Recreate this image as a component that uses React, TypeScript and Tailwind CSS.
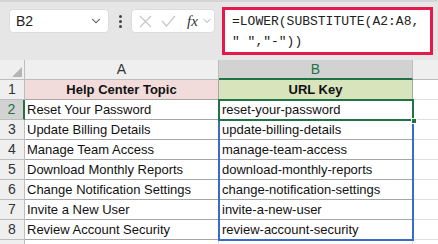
import { ChevronDown } from 'lucide-react';

const rows = [
  ['Reset Your Password', 'reset-your-password'],
  ['Update Billing Details', 'update-billing-details'],
  ['Manage Team Access', 'manage-team-access'],
  ['Download Monthly Reports', 'download-monthly-reports'],
  ['Change Notification Settings', 'change-notification-settings'],
  ['Invite a New User', 'invite-a-new-user'],
  ['Review Account Security', 'review-account-security'],
];

const cellFont = { fontFamily: '"Liberation Sans", Arial, sans-serif' };

const FormulaBar = () => (
  <div className="h-[60px] bg-[#e6e6e6] border-t-2 border-[#d4d4d4] flex items-start pt-[7px] pl-[9px] gap-0">
    {/* name box */}
    <div className="w-[100px] h-[24px] bg-white rounded-[4px] border border-[#dcdcdc] flex items-center pl-[6px] pr-[5px] justify-between">
      <span className="text-[14px] text-[#222]" style={cellFont}>B2</span>
      <ChevronDown size={14} strokeWidth={1.8} className="text-[#444]" />
    </div>
    <div className="w-[22px] h-[24px] flex flex-col items-center justify-center gap-[2px]">
      <span className="w-[3px] h-[3px] bg-[#444] rounded-full" />
      <span className="w-[3px] h-[3px] bg-[#444] rounded-full" />
      <span className="w-[3px] h-[3px] bg-[#444] rounded-full" />
    </div>
    {/* cancel / enter / fx */}
    <div className="w-[84px] h-[24px] bg-white rounded-[4px] border border-[#dcdcdc] flex items-center pl-[7px] gap-[9px]">
      <svg width="13" height="13" viewBox="0 0 13 13" className="shrink-0">
        <path d="M1 1 L12 12 M12 1 L1 12" stroke="#c8c8c8" strokeWidth="1.2" fill="none" />
      </svg>
      <svg width="15" height="12" viewBox="0 0 15 12" className="shrink-0">
        <path d="M1 6 L5.5 11 L14 1" stroke="#c8c8c8" strokeWidth="1.2" fill="none" />
      </svg>
      <span className="italic text-[15px] text-[#333] leading-none ml-[2px]" style={{ fontFamily: '"Liberation Serif", serif' }}>fx</span>
      <ChevronDown size={12} strokeWidth={1.5} className="text-[#888] -ml-[6px]" />
    </div>
    {/* formula text */}
    <div className="ml-[7px] -mt-[2px] w-[211px] h-[48px] bg-white border-[3px] border-[#e8194a] pl-[7px] pt-[2px] text-[13px] leading-[20px] text-[#222]" style={{ fontFamily: '"Liberation Mono", monospace' }}>
      <div>=LOWER(SUBSTITUTE(A2:A8,</div>
      <div>" ","-"))</div>
    </div>
  </div>
);

const Grid = () => (
  <div className="relative bg-white text-[13px] text-[#111]" style={cellFont}>
    {/* column header */}
    <div className="flex h-[20px]">
      <div className="w-[25px] bg-[#efefef] border-r border-b border-[#bdbdbd] relative">
        <svg width="10" height="10" viewBox="0 0 10 10" className="absolute right-[2px] bottom-[2px]">
          <path d="M10 0 L10 10 L0 10 Z" fill="#b5b5b5" />
        </svg>
      </div>
      <div className="w-[194px] bg-[#efefef] border-r border-b border-[#bdbdbd] flex items-center justify-center text-[14px] text-[#333]">A</div>
      <div className="w-[194px] bg-[#d2d2d2] border-r border-[#bdbdbd] border-b-2 border-b-[#217346] flex items-center justify-center text-[14px] text-[#217346]">B</div>
      <div className="flex-1 bg-[#efefef] border-b border-[#bdbdbd]" />
    </div>
    {/* header row 1 */}
    <div className="flex h-[20px]">
      <div className="w-[25px] bg-[#efefef] border-r border-b border-[#bdbdbd] flex items-center justify-center text-[14px] text-[#333]">1</div>
      <div className="w-[194px] bg-[#f2dcdb] border-r border-b border-[#a6a6a6] flex items-center justify-center font-bold">Help Center Topic</div>
      <div className="w-[194px] bg-[#d8e4bc] border-r border-b border-[#a6a6a6] flex items-center justify-center font-bold">URL Key</div>
      <div className="flex-1 border-b border-[#e0e0e0]" />
    </div>
    {rows.map(([topic, key], i) => {
      const sel = i === 0;
      return (
        <div key={topic} className="flex h-[20px]">
          <div
            className={
              sel
                ? 'w-[25px] bg-[#d2d2d2] border-r-2 border-r-[#217346] border-b border-[#bdbdbd] flex items-center justify-center text-[14px] text-[#217346]'
                : 'w-[25px] bg-[#efefef] border-r border-b border-[#bdbdbd] flex items-center justify-center text-[14px] text-[#333]'
            }
          >
            {i + 2}
          </div>
          <div className="w-[194px] border-r border-b border-[#a6a6a6] flex items-center pl-[2px] whitespace-nowrap overflow-hidden">{topic}</div>
          <div className="w-[194px] border-r border-b border-[#a6a6a6] flex items-center pl-[3px] whitespace-nowrap">{key}</div>
          <div className="flex-1 border-b border-[#e0e0e0]" />
        </div>
      );
    })}
    <div className="flex h-[20px]">
      <div className="w-[25px] bg-[#efefef] border-r border-[#bdbdbd]" />
      <div className="w-[194px] border-r border-[#e0e0e0]" />
      <div className="w-[194px] border-r border-[#e0e0e0]" />
    </div>
    {/* blue range border B3:B8 */}
    <div className="absolute left-[218px] top-[60px] w-[196px] h-[121px] border-2 border-t-0 border-[#3b6bc9] pointer-events-none" />
    {/* selected cell B2 */}
    <div className="absolute left-[218px] top-[39px] w-[196px] h-[22px] border-2 border-[#217346] pointer-events-none" />
    <div className="absolute left-[411px] top-[58px] w-[6px] h-[6px] bg-[#217346] border border-white pointer-events-none" />
  </div>
);

export default function App() {
  return (
    <div className="w-[438px] h-[244px] overflow-hidden bg-white">
      <FormulaBar />
      <Grid />
    </div>
  );
}
